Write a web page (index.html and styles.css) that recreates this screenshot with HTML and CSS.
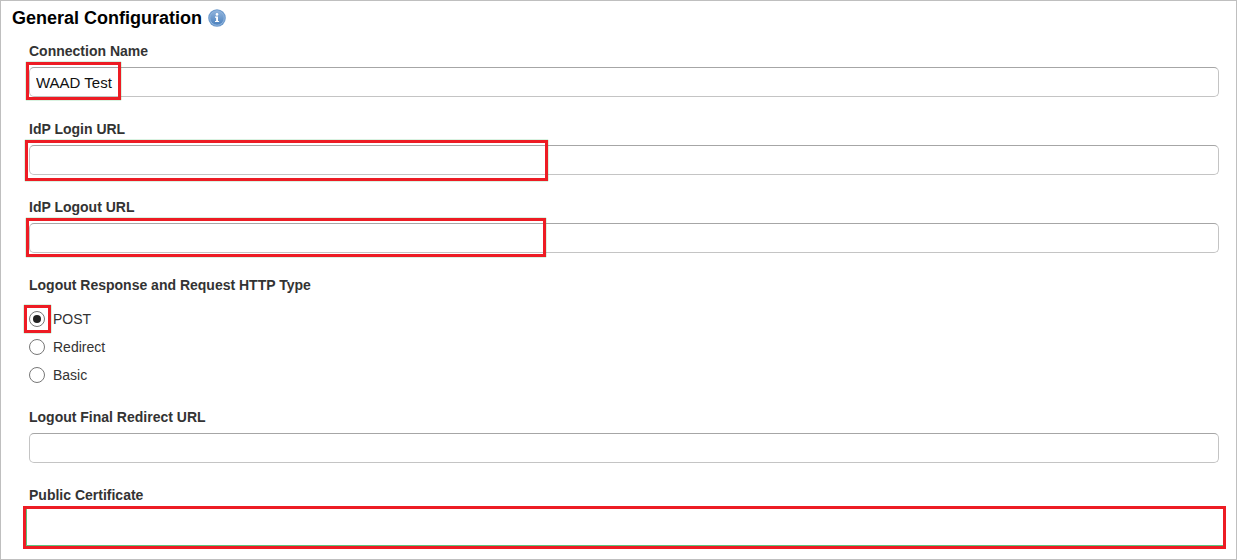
FILE: index.html
```html
<!DOCTYPE html>
<html lang="en">
<head>
    <meta charset="UTF-8">
    <meta name="viewport" content="width=device-width, initial-scale=1.0">
    <title>General Configuration</title>
    <link rel="stylesheet" href="styles.css">
</head>
<body>
    <form class="config">
        <h1 class="title">
            General Configuration
            <svg class="info-icon" viewBox="0 0 18 18" aria-hidden="true">
                <defs>
                    <linearGradient id="infoFill" x1="0" y1="0" x2="0" y2="1">
                        <stop offset="0" stop-color="#8fb3dc"/>
                        <stop offset="1" stop-color="#4a80bd"/>
                    </linearGradient>
                </defs>
                <circle cx="9" cy="9" r="8.8" fill="#6e9bcd"/>
                <circle cx="9" cy="9" r="7.2" fill="url(#infoFill)" stroke="#8fb3dc" stroke-width="1"/>
                <circle cx="9" cy="5.4" r="1.3" fill="#fff"/>
                <path d="M7 7.6h3v4.3h1.1v1.2H7v-1.2h1.1V8.8H7z" fill="#fff"/>
            </svg>
        </h1>

        <div class="fields">
            <div class="field">
                <label for="connectionName">Connection Name</label>
                <div class="control">
                    <input type="text" id="connectionName" value="WAAD Test">
                    <span class="highlight highlight-name"></span>
                </div>
            </div>

            <div class="field">
                <label for="loginUrl">IdP Login URL</label>
                <div class="control">
                    <input type="text" id="loginUrl">
                    <span class="highlight highlight-login"></span>
                </div>
            </div>

            <div class="field">
                <label for="logoutUrl">IdP Logout URL</label>
                <div class="control">
                    <input type="text" id="logoutUrl">
                    <span class="highlight highlight-logout"></span>
                </div>
            </div>

            <fieldset class="http-type">
                <legend>Logout Response and Request HTTP Type</legend>
                <label class="option">
                    <input type="radio" name="httpType" value="post" checked>
                    POST
                    <span class="highlight highlight-radio"></span>
                </label>
                <label class="option">
                    <input type="radio" name="httpType" value="redirect">
                    Redirect
                </label>
                <label class="option">
                    <input type="radio" name="httpType" value="basic">
                    Basic
                </label>
            </fieldset>

            <div class="field">
                <label for="finalUrl">Logout Final Redirect URL</label>
                <div class="control">
                    <input type="text" id="finalUrl">
                </div>
            </div>

            <div class="field">
                <label for="certificate">Public Certificate</label>
                <div class="control">
                    <textarea id="certificate" rows="1"></textarea>
                    <span class="highlight highlight-certificate"></span>
                </div>
            </div>
        </div>
    </form>
</body>
</html>
```
FILE: styles.css
```css
* {
    box-sizing: border-box;
}
body {
    margin: 0;
    background-color: #fff;
    color: #333;
    font-family: "Liberation Sans", Arial, Helvetica, sans-serif;
    font-size: 15px;
    line-height: 20px;
}
.config {
    min-height: 100vh;
    padding: 5px 17px 0 11px;
    border: 1px solid #bfbfbf;
}
.title {
    display: flex;
    align-items: center;
    gap: 6px;
    margin: 0 0 11px;
    color: #000;
    font-size: 18px;
    line-height: 24px;
}
.info-icon {
    width: 18px;
    height: 18px;
}
.fields {
    padding-left: 17px;
}
.field {
    margin-bottom: 22px;
}
.field:last-child {
    margin-bottom: 0;
}
.field label,
.http-type legend {
    display: block;
    padding: 0;
    font-size: 14px;
    font-weight: bold;
}
.control {
    position: relative;
    margin-top: 6px;
}
.control input,
.control textarea {
    display: block;
    width: 100%;
    height: 30px;
    padding: 0 6px;
    border: 1px solid #c4c4c4;
    border-top-color: #a6a6a6;
    border-radius: 5px;
    background-color: #fff;
    color: #111;
    font-family: inherit;
    font-size: 15px;
    resize: none;
}
.control textarea {
    height: 36px;
    border-color: transparent;
}
.http-type {
    margin: 0 0 18px;
    padding: 0;
    border: 0;
}
.http-type legend {
    margin-bottom: 10px;
}
.option {
    position: relative;
    display: flex;
    align-items: center;
    gap: 8px;
    height: 28px;
    font-size: 14px;
}
.option input {
    appearance: none;
    display: grid;
    place-items: center;
    width: 16px;
    height: 16px;
    margin: 0;
    border: 1px solid #777;
    border-radius: 50%;
    background-color: #fff;
}
.option input:checked::before {
    content: "";
    width: 8px;
    height: 8px;
    border-radius: 50%;
    background-color: #222;
}

/* red frames around the required values */
.highlight {
    position: absolute;
    border: 3px solid #ed1c24;
    box-shadow: 0 0 1px #22b14c;
    pointer-events: none;
}
.highlight-name {
    top: -5px;
    left: -3px;
    width: 95px;
    height: 38px;
}
.highlight-login {
    top: -5px;
    left: -4px;
    width: 523px;
    height: 41px;
}
.highlight-logout {
    top: -5px;
    left: -3px;
    width: 520px;
    height: 39px;
}
.highlight-radio {
    top: 0;
    left: -5px;
    width: 27px;
    height: 28px;
}
.highlight-certificate {
    top: -5px;
    right: -7px;
    left: -6px;
    height: 43px;
    box-shadow: inset 1px -1px 0 #5cc47c;
}
```
